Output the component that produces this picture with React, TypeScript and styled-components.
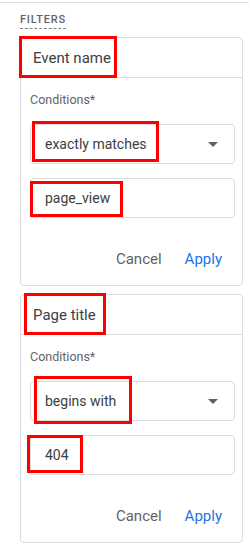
import styled, { createGlobalStyle } from "styled-components"

const GlobalStyle = createGlobalStyle`
  html, body {
    margin: 0;
    padding: 0;
    background: #ffffff;
  }

  body {
    font-family: Roboto, "Liberation Sans", Arial, sans-serif;
    color: #3c4043;
  }
`

type Box = { top: number; right: number; bottom: number; left: number }

type Filter = {
  name: string
  nameMark: Box
  condition: string
  conditionMark: Box
  value: string
  valueMark: Box
}

const filters: Filter[] = [
  {
    name: "Event name",
    nameMark: { top: -13, right: -6, bottom: -11, left: -14 },
    condition: "exactly matches",
    conditionMark: { top: -14, right: -12, bottom: -9, left: -13 },
    value: "page_view",
    valueMark: { top: -8, right: -13, bottom: -10, left: -15 },
  },
  {
    name: "Page title",
    nameMark: { top: -13, right: -10, bottom: -11, left: -9 },
    condition: "begins with",
    conditionMark: { top: -16, right: -16, bottom: -14, left: -11 },
    value: "404",
    valueMark: { top: -11, right: -14, bottom: -9, left: -18 },
  },
]

export default function App() {
  return (
    <Page>
      <GlobalStyle />
      <Section>
        <SectionLabel>Filters</SectionLabel>

        {filters.map((filter) => (
          <FilterCard key={filter.name}>
            <CardHeader>
              <Marked $box={filter.nameMark}>{filter.name}</Marked>
            </CardHeader>

            <CardBody>
              <FieldLabel>Conditions*</FieldLabel>

              <SelectBox>
                <Marked $box={filter.conditionMark}>{filter.condition}</Marked>
                <Caret />
              </SelectBox>

              <InputBox>
                <Marked $box={filter.valueMark}>{filter.value}</Marked>
              </InputBox>

              <Actions>
                <TextButton>Cancel</TextButton>
                <TextButton $primary>Apply</TextButton>
              </Actions>
            </CardBody>
          </FilterCard>
        ))}
      </Section>
    </Page>
  )
}

const Page = styled.div`
  padding-top: 2px;
  width: 249px;
  min-height: 546px;
  box-sizing: border-box;
`

const Section = styled.section`
  border-top: 1px solid #e0e0e0;
  padding: 0 6px 0 20px;
  display: flex;
  flex-direction: column;
  align-items: flex-start;
`

const SectionLabel = styled.h3`
  margin: 10px 0 0 0;
  padding-bottom: 2px;
  font-size: 11px;
  line-height: 13px;
  font-weight: 500;
  letter-spacing: 0.8px;
  text-transform: uppercase;
  color: #5f6368;
  border-bottom: 1px dashed #80868b;
`

const FilterCard = styled.div`
  margin-top: 8px;
  width: 223px;
  box-sizing: border-box;
  border: 1px solid #dadce0;
  border-radius: 4px;
  background: #ffffff;
`

const CardHeader = styled.div`
  height: 39px;
  display: flex;
  align-items: center;
  padding-left: 12px;
  border-bottom: 1px solid #dadce0;
  font-size: 15px;
  color: #3c4043;
`

const CardBody = styled.div`
  display: flex;
  flex-direction: column;
  padding: 14px 7px 8px 9px;
`

const FieldLabel = styled.label`
  font-size: 12.5px;
  line-height: 16px;
  color: #5f6368;
`

const Field = styled.div`
  height: 40px;
  box-sizing: border-box;
  display: flex;
  align-items: center;
  padding: 0 16px 0 14px;
  border: 1px solid #dadce0;
  border-radius: 4px;
  font-size: 14px;
  color: #3c4043;
`

const SelectBox = styled(Field)`
  margin-top: 16px;
  justify-content: space-between;
`

const InputBox = styled(Field)`
  margin-top: 14px;
`

const Caret = styled.span`
  width: 0;
  height: 0;
  border-left: 5px solid transparent;
  border-right: 5px solid transparent;
  border-top: 5px solid #5f6368;
`

const Marked = styled.span<{ $box: Box }>`
  position: relative;
  display: inline-block;
  line-height: 18px;

  &::after {
    content: "";
    position: absolute;
    top: ${(p) => p.$box.top}px;
    right: ${(p) => p.$box.right}px;
    bottom: ${(p) => p.$box.bottom}px;
    left: ${(p) => p.$box.left}px;
    border: 3px solid #ff0000;
    pointer-events: none;
  }
`

const Actions = styled.div`
  margin-top: 23px;
  height: 36px;
  display: flex;
  justify-content: flex-end;
  align-items: center;
  gap: 7px;
  padding-right: 5px;
`

const TextButton = styled.button<{ $primary?: boolean }>`
  height: 36px;
  padding: 0 8px;
  border: 0;
  background: transparent;
  font-family: inherit;
  font-size: 15px;
  font-weight: 400;
  color: ${(p) => (p.$primary ? "#1a73e8" : "#5f6368")};
  cursor: pointer;
`
